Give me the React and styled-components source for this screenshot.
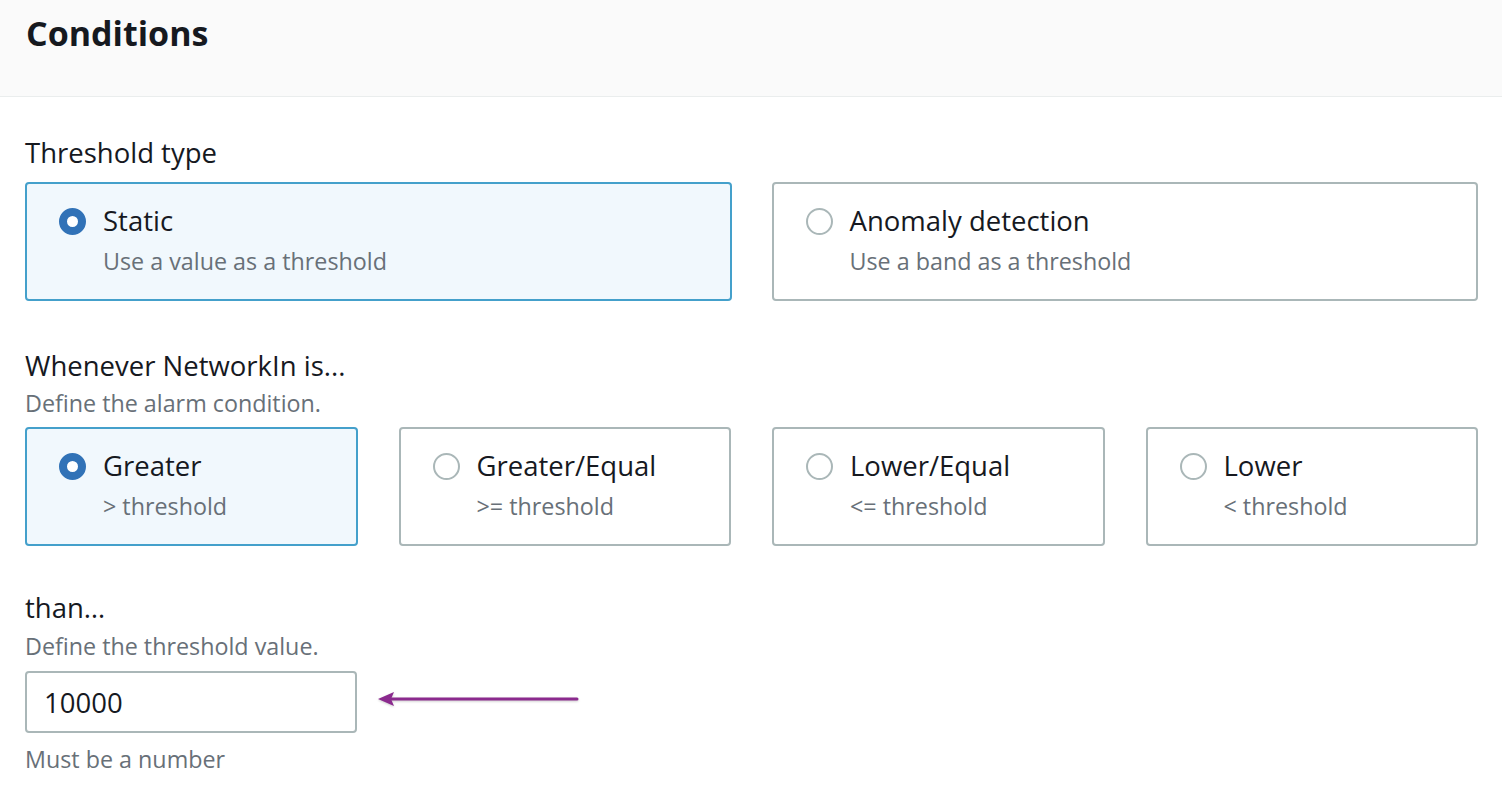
import React, { useState } from "react";
import styled, { createGlobalStyle } from "styled-components";

const GlobalStyle = createGlobalStyle`
  html, body {
    margin: 0;
    padding: 0;
    background: #ffffff;
  }
  body {
    font-family: "Open Sans", "Noto Sans", Arial, sans-serif;
    color: #16191f;
  }
`;

const Panel = styled.div`
  width: 1502px;
  height: 812px;
  overflow: hidden;
  background: #ffffff;
`;

const Header = styled.div`
  height: 97px;
  background: #fafafa;
  border-bottom: 1px solid #eaeded;
  padding: 11px 26px 0;
  box-sizing: border-box;
`;

const Title = styled.h2`
  margin: 0;
  font-size: 34px;
  font-weight: 700;
  line-height: 44px;
  color: #16191f;
`;

const Body = styled.div`
  padding: 39px 24px 0 25px;
`;

const Field = styled.div`
  margin-bottom: ${(p) => p.gap || 0}px;
`;

const Label = styled.div`
  font-size: 27.5px;
  line-height: 34px;
  color: #16191f;
`;

const Hint = styled.div`
  font-size: 23.3px;
  line-height: 30px;
  color: #687078;
  margin-top: ${(p) => p.top || 0}px;
`;

const Tiles = styled.div`
  display: grid;
  grid-template-columns: repeat(${(p) => p.cols}, 1fr);
  column-gap: ${(p) => p.colGap}px;
  margin-top: ${(p) => p.top || 0}px;
`;

const Tile = styled.label`
  display: flex;
  align-items: flex-start;
  gap: 17px;
  height: 119px;
  box-sizing: border-box;
  padding: 23px 32px;
  border: 2px solid ${(p) => (p.selected ? "#44a0cb" : "#aab7b8")};
  border-radius: 4px;
  background: ${(p) => (p.selected ? "#f1f8fd" : "#ffffff")};
  cursor: pointer;
`;

const Radio = styled.span`
  flex: none;
  width: 27px;
  height: 27px;
  margin-top: 1px;
  border-radius: 50%;
  box-sizing: border-box;
  border: ${(p) => (p.checked ? "8px solid #3172b7" : "2px solid #aab7b8")};
  background: #ffffff;
`;

const TileText = styled.div`
  display: flex;
  flex-direction: column;
`;

const TileTitle = styled.div`
  font-size: 27.5px;
  line-height: 28px;
  color: #16191f;
`;

const TileSub = styled.div`
  font-size: 23.3px;
  line-height: 28px;
  margin-top: 12px;
  color: #687078;
`;

const InputRow = styled.div`
  display: flex;
  align-items: center;
  gap: 21px;
  margin-top: 10px;
`;

const Input = styled.input`
  width: 332px;
  height: 62px;
  box-sizing: border-box;
  border: 2px solid #aab7b8;
  border-radius: 4px;
  padding: 0 17px;
  font-family: "Open Sans", "Noto Sans", Arial, sans-serif;
  font-size: 27.5px;
  color: #16191f;
  outline: none;
`;

const ArrowMark = styled.svg`
  flex: none;
  margin-top: -4px;
  filter: drop-shadow(0 1px 1px rgba(0, 0, 0, 0.2));
`;

const thresholdTypes = [
  { id: "static", title: "Static", sub: "Use a value as a threshold" },
  { id: "anomaly", title: "Anomaly detection", sub: "Use a band as a threshold" },
];

const operators = [
  { id: "gt", title: "Greater", sub: "> threshold" },
  { id: "ge", title: "Greater/Equal", sub: ">= threshold" },
  { id: "le", title: "Lower/Equal", sub: "<= threshold" },
  { id: "lt", title: "Lower", sub: "< threshold" },
];

const Arrow = () => (
  <ArrowMark width="202" height="18" viewBox="0 0 202 18">
    <line x1="12" y1="8" x2="199" y2="8" stroke="#8b2a8e" strokeWidth="3" strokeLinecap="round" />
    <polygon points="0,8 16,1 13,8 16,15" fill="#8b2a8e" />
  </ArrowMark>
);

export default function App() {
  const [type, setType] = useState("static");
  const [op, setOp] = useState("gt");
  const [value, setValue] = useState("10000");

  return (
    <Panel>
      <GlobalStyle />
      <Header>
        <Title>Conditions</Title>
      </Header>
      <Body>
        <Field gap={48}>
          <Label>Threshold type</Label>
          <Tiles cols={2} colGap={40} top={12}>
            {thresholdTypes.map((t) => (
              <Tile key={t.id} selected={type === t.id} onClick={() => setType(t.id)}>
                <Radio checked={type === t.id} />
                <TileText>
                  <TileTitle>{t.title}</TileTitle>
                  <TileSub>{t.sub}</TileSub>
                </TileText>
              </Tile>
            ))}
          </Tiles>
        </Field>
        <Field gap={45}>
          <Label>Whenever NetworkIn is...</Label>
          <Hint top={5}>Define the alarm condition.</Hint>
          <Tiles cols={4} colGap={41} top={9}>
            {operators.map((o) => (
              <Tile key={o.id} selected={op === o.id} onClick={() => setOp(o.id)}>
                <Radio checked={op === o.id} />
                <TileText>
                  <TileTitle>{o.title}</TileTitle>
                  <TileSub>{o.sub}</TileSub>
                </TileText>
              </Tile>
            ))}
          </Tiles>
        </Field>
        <Field>
          <Label>than…</Label>
          <Hint top={6}>Define the threshold value.</Hint>
          <InputRow>
            <Input value={value} onChange={(e) => setValue(e.target.value)} />
            <Arrow />
          </InputRow>
          <Hint top={11}>Must be a number</Hint>
        </Field>
      </Body>
    </Panel>
  );
}
